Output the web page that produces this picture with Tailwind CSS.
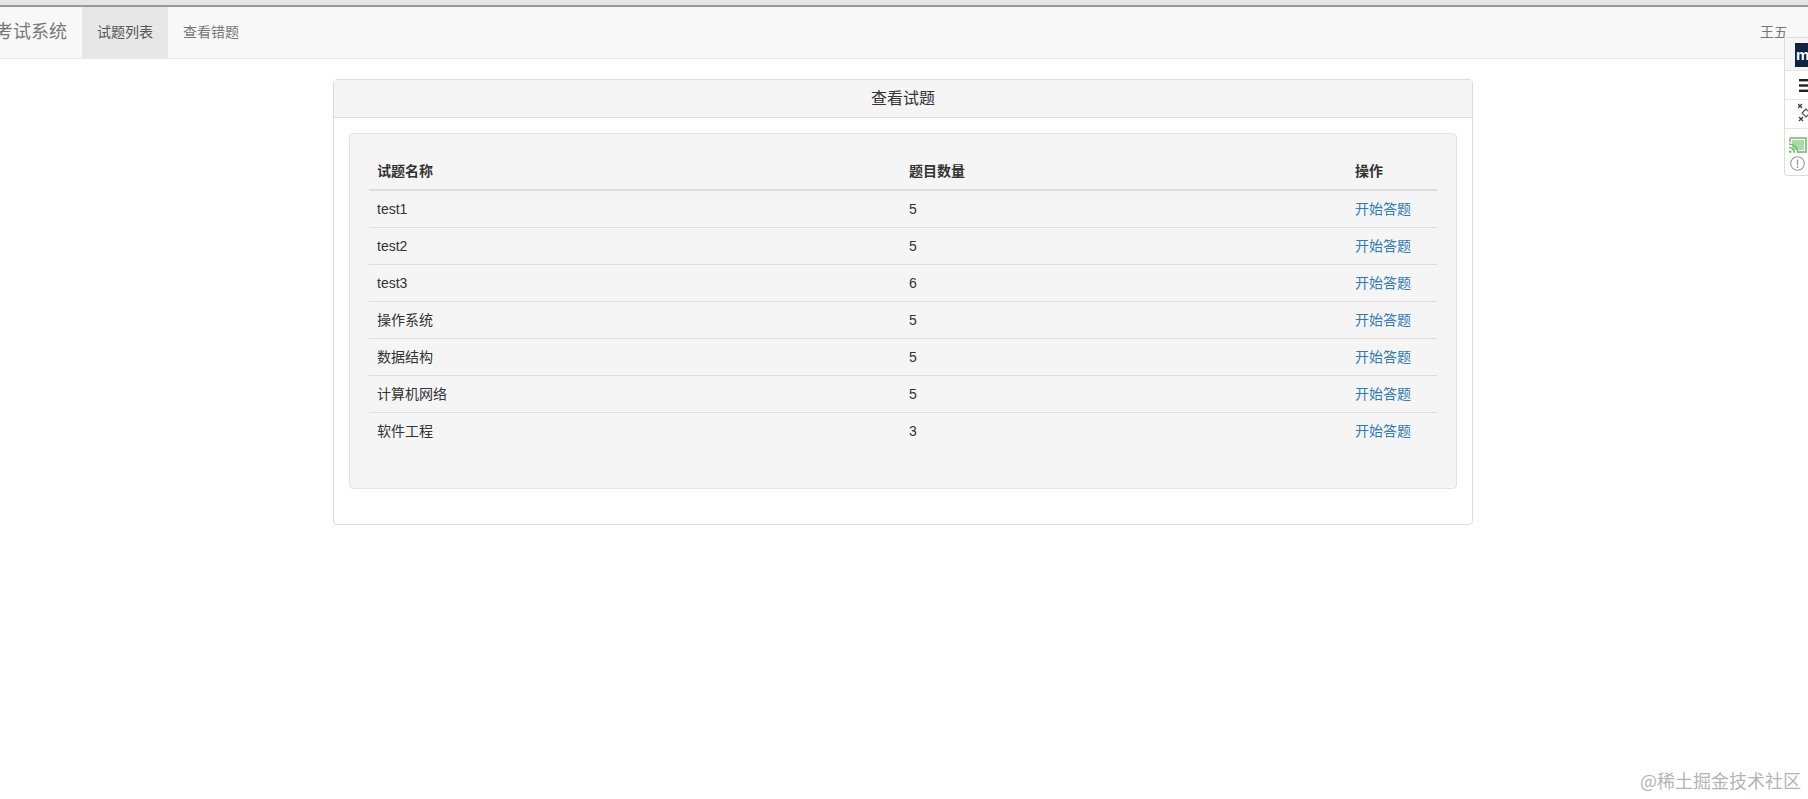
<!DOCTYPE html>
<html lang="zh-CN">
<head>
  <meta charset="UTF-8">
  <title>考试系统</title>
  <script src="https://cdn.jsdelivr.net/npm/@tailwindcss/browser@4"></script>
</head>
<body class="relative h-[799px] overflow-hidden bg-white font-['Liberation_Sans','Noto_Sans_CJK_SC',sans-serif] text-[14px] text-[#333]">
  <div class="h-[7px] border-b-2 border-[#999] bg-[#e6e6e6]"></div>
  <nav class="flex h-[52px] items-stretch border-b border-[#e7e7e7] bg-[#f8f8f8] text-[#777]">
    <div class="ml-[-5px] flex w-[87px] items-center text-[18px]">考试系统</div>
    <a class="flex items-center bg-[#e7e7e7] px-[15px] text-[#555]">试题列表</a>
    <a class="flex items-center px-[15px]">查看错题</a>
    <div class="ml-auto mr-[20px] flex items-center">王五</div>
  </nav>
  <main class="ml-[333px] mt-[20px] w-[1140px] rounded border border-[#ddd]">
    <div class="h-[38px] border-b border-[#ddd] bg-[#f5f5f5] text-center text-[16px] leading-[37px]">查看试题</div>
    <div class="p-[15px]">
      <div class="rounded border border-[#e3e3e3] bg-[#f5f5f5] px-[19px] pt-[19px] pb-[39px]">
        <table class="w-full">
          <thead>
            <tr class="h-[37px] border-b-2 border-[#ddd] text-left font-bold">
              <th class="w-[532px] px-2">试题名称</th><th class="w-[446px] px-2">题目数量</th><th class="px-2">操作</th>
            </tr>
          </thead>
          <tbody>
            <tr class="h-[37px]"><td class="px-2 pt-[2px]">test1</td><td class="px-2 pt-[2px]">5</td><td class="px-2 pt-[2px] text-[#337ab7]">开始答题</td></tr>
            <tr class="h-[37px] border-t border-[#ddd]"><td class="px-2 pt-[2px]">test2</td><td class="px-2 pt-[2px]">5</td><td class="px-2 pt-[2px] text-[#337ab7]">开始答题</td></tr>
            <tr class="h-[37px] border-t border-[#ddd]"><td class="px-2 pt-[2px]">test3</td><td class="px-2 pt-[2px]">6</td><td class="px-2 pt-[2px] text-[#337ab7]">开始答题</td></tr>
            <tr class="h-[37px] border-t border-[#ddd]"><td class="px-2 pt-[2px]">操作系统</td><td class="px-2 pt-[2px]">5</td><td class="px-2 pt-[2px] text-[#337ab7]">开始答题</td></tr>
            <tr class="h-[37px] border-t border-[#ddd]"><td class="px-2 pt-[2px]">数据结构</td><td class="px-2 pt-[2px]">5</td><td class="px-2 pt-[2px] text-[#337ab7]">开始答题</td></tr>
            <tr class="h-[37px] border-t border-[#ddd]"><td class="px-2 pt-[2px]">计算机网络</td><td class="px-2 pt-[2px]">5</td><td class="px-2 pt-[2px] text-[#337ab7]">开始答题</td></tr>
            <tr class="h-[37px] border-t border-[#ddd]"><td class="px-2 pt-[2px]">软件工程</td><td class="px-2 pt-[2px]">3</td><td class="px-2 pt-[2px] text-[#337ab7]">开始答题</td></tr>
          </tbody>
        </table>
      </div>
      <div class="h-[20px]"></div>
    </div>
  </main>
  <!-- floating toolbar at right edge -->
  <aside class="absolute left-[1784px] top-[37px] h-[139px] w-[24px] overflow-hidden rounded-bl border border-r-0 border-[#ddd] bg-white">
    <div class="flex h-[33px] items-center border-b border-[#e5e5e5] bg-[#f5f5f5] pl-[10px] pt-[2px]">
      <div class="h-[24px] w-[13px] shrink-0 overflow-hidden bg-[#12233f] pl-[1px] text-[15px] font-bold leading-[24px] text-white">m</div>
    </div>
    <div class="flex h-[29px] items-center border-b border-[#e5e5e5] pl-[14px]">
      <svg width="9" height="13" viewBox="0 0 9 13" fill="#222"><rect width="9" height="2.4"/><rect y="5.3" width="9" height="2.4"/><rect y="10.6" width="9" height="2.4"/></svg>
    </div>
    <div class="h-[29px] border-b border-[#e5e5e5] pl-[13px] pt-[3px]">
      <svg class="block" width="11" height="19" viewBox="0 0 11 19" fill="none">
        <path d="M0 1l4 4M4 1L0 5M1 14l4 4M5 14l-4 4" stroke="#2c3e5a" stroke-width="1.3"/>
        <path d="M8 6l-4 4 4 4 4-4z" stroke="#6b4a3a" stroke-width="1.2"/>
      </svg>
    </div>
    <div class="pl-[4px] pt-[8px]">
      <svg class="block" width="18" height="16" viewBox="0 0 18 16">
        <path d="M2 0h16v16H9v-2h7V2H2v3H0V2a2 2 0 0 1 2-2z" fill="#8ccb8c"/>
        <rect x="3" y="3" width="12" height="10" fill="#a8dca8"/>
        <path d="M0 7a9 9 0 0 1 9 9M0 10.5a5.5 5.5 0 0 1 5.5 5.5" fill="none" stroke="#6fbf6f" stroke-width="1.5"/>
        <circle cx="1.3" cy="14.7" r="1.3" fill="#6fbf6f"/>
      </svg>
      <svg class="mt-[3px] ml-[1px] block" width="15" height="15" viewBox="0 0 15 15">
        <circle cx="7.5" cy="7.5" r="6.8" fill="none" stroke="#999" stroke-width="1.1"/>
        <path d="M7.5 3.5v5.5" stroke="#999" stroke-width="1.3"/>
        <circle cx="7.5" cy="11" r="0.9" fill="#999"/>
      </svg>
    </div>
  </aside>
  <div class="absolute right-[7px] bottom-[5px] font-['Noto_Sans_CJK_SC',sans-serif] text-[18px] text-[#b4b4b4]">@稀土掘金技术社区</div>
</body>
</html>
